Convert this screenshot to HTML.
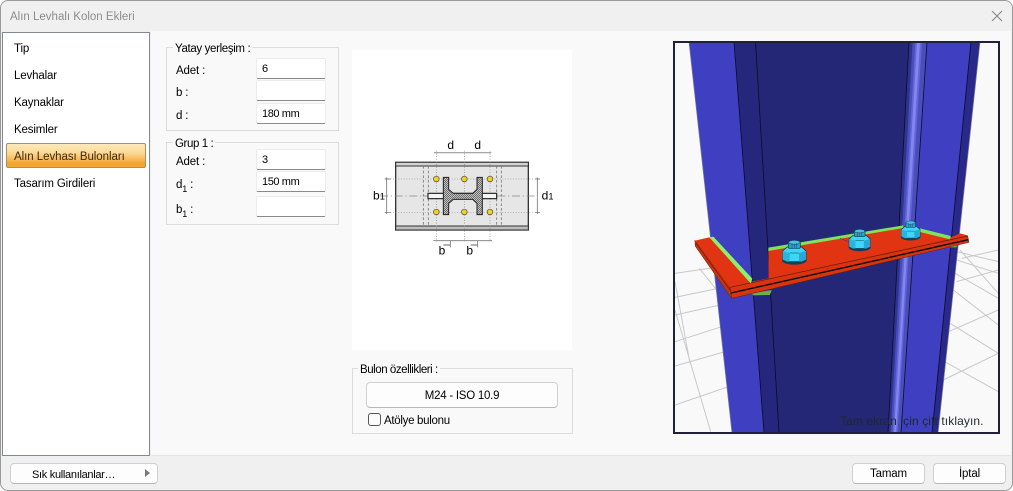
<!DOCTYPE html>
<html>
<head>
<meta charset="utf-8">
<style>
html,body{margin:0;padding:0;width:1013px;height:491px;overflow:hidden;background:#fff}
body{font-family:"Liberation Sans","DejaVu Sans",sans-serif;font-size:11.5px;letter-spacing:-.15px;color:#000}
.a{position:absolute}
.t{position:absolute;white-space:nowrap;line-height:14px;height:14px;transform:translateY(1px)}
#win{position:absolute;left:0;top:0;width:1011px;height:489px;border:1px solid #9a9a9a;border-radius:8px;background:#f0f0f0;overflow:hidden}
.inp{position:absolute;left:256px;width:68px;height:19px;background:#fff;border:1px solid #ececec;border-bottom:1px solid #8a8a8a;border-radius:2px;box-sizing:content-box}
.inp span{position:absolute;left:5px;top:3px;line-height:14px;font-size:11px;letter-spacing:-.4px}
.grp{position:absolute;border:1px solid #dcdcdc;box-sizing:border-box}
.lg{position:absolute;background:#f9f9f9;padding:0 2px;line-height:14px;white-space:nowrap;transform:translateY(1px)}
.btn{position:absolute;background:#fdfdfd;border:1px solid #d0d0d0;border-bottom-color:#b8b8b8;border-radius:4px;box-sizing:border-box;text-align:center;line-height:20px}
sub{font-size:9px;line-height:0;vertical-align:-4px}
</style>
</head>
<body>
<div id="win"></div>
<div class="t" style="left:10px;top:9px;color:#8c8c8c;font-size:11.5px;letter-spacing:0">Alın Levhalı Kolon Ekleri</div>
<svg class="a" style="left:990px;top:9px" width="14" height="14"><path d="M2 2L12 12M12 2L2 12" stroke="#888" stroke-width="1.1" fill="none"/></svg>

<div class="a" style="left:151px;top:31px;width:860px;height:424px;background:#f9f9f9;border-bottom:1px solid #e4e4e4"></div>
<div class="a" style="left:2px;top:32px;width:146px;height:422px;background:#fff;border:1px solid #828a94"></div>

<div class="t" style="left:14px;top:41px">Tip</div>
<div class="t" style="left:14px;top:68px">Levhalar</div>
<div class="t" style="left:14px;top:95px">Kaynaklar</div>
<div class="t" style="left:14px;top:122px">Kesimler</div>
<div class="a" style="left:6px;top:143px;width:140px;height:25px;box-sizing:border-box;border:1px solid #a98f62;border-radius:2px;background:linear-gradient(#fde9bd 0%,#fcd993 40%,#fbc670 55%,#f5a32c 85%,#f2a73a 100%)"></div>
<div class="t" style="left:14px;top:149px;color:#3a2a10;letter-spacing:-.05px">Alın Levhası Bulonları</div>
<div class="t" style="left:14px;top:176px">Tasarım Girdileri</div>

<div class="grp" style="left:166px;top:47px;width:173px;height:84px"></div>
<div class="lg" style="left:173px;top:41px;letter-spacing:-.35px">Yatay yerleşim :</div>
<div class="t" style="left:176px;top:63px">Adet :</div>
<div class="t" style="left:176px;top:85px">b :</div>
<div class="t" style="left:176px;top:108px">d :</div>
<div class="inp" style="top:58px"><span>6</span></div>
<div class="inp" style="top:80px"></div>
<div class="inp" style="top:103px"><span>180 mm</span></div>

<div class="grp" style="left:166px;top:142px;width:173px;height:83px"></div>
<div class="lg" style="left:173px;top:136px;letter-spacing:-.4px">Grup 1 :</div>
<div class="t" style="left:176px;top:154px">Adet :</div>
<div class="t" style="left:176px;top:177px">d<sub>1</sub> :</div>
<div class="t" style="left:176px;top:202px">b<sub>1</sub> :</div>
<div class="inp" style="top:149px"><span>3</span></div>
<div class="inp" style="top:171px"><span>150 mm</span></div>
<div class="inp" style="top:196px"></div>

<div class="a" style="left:352px;top:50px;width:220px;height:300px;background:#fff"></div>
<svg class="a" style="left:360px;top:130px;letter-spacing:0" width="200" height="130" viewBox="0 0 600 390" font-family="Liberation Sans, sans-serif">
  <defs>
    <pattern id="h" width="6" height="6" patternUnits="userSpaceOnUse">
      <rect width="6" height="6" fill="#c4c4c4"/>
      <rect width="3" height="3" fill="#6a6a6a"/>
      <rect x="3" y="3" width="3" height="3" fill="#6a6a6a"/>
    </pattern>
  </defs>
  <rect x="107" y="97" width="398" height="203" fill="#e6e6e6" stroke="#333" stroke-width="4"/>
  <rect x="107" y="97" width="398" height="11" fill="#d4d4d4" stroke="#333" stroke-width="3"/>
  <rect x="107" y="288" width="398" height="12" fill="#bdbdbd" stroke="#333" stroke-width="3"/>
  <g stroke="#777" stroke-width="2.5" stroke-dasharray="8 6" fill="none">
    <path d="M190 108V288M205 108V288M410 108V288M424 108V288"/>
  </g>
  <path d="M60 198H530" stroke="#888" stroke-width="2" stroke-dasharray="24 8 4 8" fill="none"/>
  <path d="M75 147H505M75 247H505M535 147H505M535 247H505" stroke="#999" stroke-width="2" stroke-dasharray="3 5" fill="none"/>
  <path d="M229 62V335M313 62V335M390 62V335" stroke="#888" stroke-width="2" stroke-dasharray="3 5" fill="none"/>
  <rect x="204" y="190" width="206" height="16" fill="#f5f5f5" stroke="#222" stroke-width="3.5"/>
  <path d="M250 142H266V178L280 190H338L351 178V142H367V254H351V220L338 208H280L266 220V254H250Z" fill="url(#h)" stroke="#222" stroke-width="3"/>
  <g fill="#f2d21e" stroke="#444" stroke-width="2">
    <circle cx="229" cy="147" r="8.5"/><circle cx="313" cy="147" r="8.5"/><circle cx="390" cy="147" r="8.5"/>
    <circle cx="229" cy="246" r="8.5"/><circle cx="313" cy="246" r="8.5"/><circle cx="390" cy="246" r="8.5"/>
  </g>
  <path d="M222 68H394" stroke="#999" stroke-width="3.5" fill="none"/>
  <path d="M220 332H396M80 142V252M532 142V252M271 332V352M353 332V352" stroke="#777" stroke-width="2.5" fill="none"/>
  <path d="M74 147H92M74 247H92M526 147H540M526 247H540" stroke="#666" stroke-width="2" fill="none"/>
  <path d="M250 345H270M332 345H352" stroke="#333" stroke-width="2" fill="none"/>
  <text x="262" y="57" font-size="36">d</text>
  <text x="343" y="57" font-size="36">d</text>
  <text x="39" y="208" font-size="36">b<tspan font-size="28">1</tspan></text>
  <text x="545" y="208" font-size="36">d<tspan font-size="28">1</tspan></text>
  <text x="236" y="373" font-size="36">b</text>
  <text x="319" y="373" font-size="36">b</text>
</svg>

<div class="grp" style="left:352px;top:368px;width:221px;height:66px"></div>
<div class="lg" style="left:358px;top:362px;letter-spacing:-.45px">Bulon özellikleri :</div>
<div class="btn" style="left:366px;top:382px;width:192px;height:26px;line-height:26px;letter-spacing:-.25px">M24 - ISO 10.9</div>
<div class="a" style="left:368px;top:413px;width:13px;height:13px;box-sizing:border-box;background:#fbfbfb;border:1px solid #555;border-radius:3px"></div>
<div class="t" style="left:384px;top:413px;letter-spacing:-.3px">Atölye bulonu</div>

<svg class="a" style="left:673px;top:41px" width="327" height="393" viewBox="673 41 327 393">
  <rect x="673" y="41" width="327" height="393" fill="#f9f9f9"/>
  <g transform="translate(670,210) scale(.33333)" stroke="#c8c8c8" stroke-width="3" fill="none">
    <path d="M15 190L135 172M15 262L145 235M15 315L150 285M15 395L155 350M15 468L165 425M15 585L175 530"/>
    <path d="M88 175L140 240M15 300L122 665M15 215L60 460"/>
    <path d="M860 125L985 155M860 150L985 190M855 190L985 265M850 240L985 345M840 340L985 430M815 450L985 545"/>
    <path d="M985 120L875 145M985 180L860 215M985 300L835 365M985 430L820 510M870 120L985 250"/>
  </g>
  <polygon points="689,42 734,42 764,433 732,433" fill="#3f3fc2"/>
  <polygon points="734,42 755.5,42 779,433 764,433" fill="#25277c"/>
  <polygon points="755.5,42 909,42 888,433 779,433" fill="#242676"/>
  <polygon points="927,42 971,42 932,433 901,433" fill="#3f3fc2"/>
  <polygon points="971,42 980,42 938,433 932,433" fill="#28298a"/>
  <polygon points="909,42 927,42 901,433 888,433" fill="#4a4eba"/>
  <polygon points="909,42 912.6,42 890.6,433 888,433" fill="#2f3290"/>
  <polygon points="915.3,42 922,42 897.5,433 892.5,433" fill="#6266d6"/>
  <polygon points="917,42 920,42 896.2,433 894,433" fill="#8285f2"/>
  <g stroke="#0b0b2a" stroke-width=".8" fill="none">
    <path d="M734 42L764 433M755.5 42L779 433M909 42L888 433M927 42L901 433M971 42L932 433"/>
  </g>
  <path d="M689 42L732 433M980 42L938 433" stroke="#77779a" stroke-width=".7" fill="none"/>

  <g transform="translate(670,210) scale(.33333)">
    <polygon points="245,250 305,240 300,255 250,256" fill="#6fae4e"/>
    <polygon points="838,105 862,100 860,112 840,112" fill="#6fae4e"/>
    <polygon points="75,92 180,232 185,265 76,108" fill="#c8340f" stroke="#8a240a" stroke-width="2"/>
    <polygon points="180,232 893,78 897,97 185,265" fill="#d8350f" stroke="#6a1a06" stroke-width="1.5"/>
    <path d="M183 249L895 89" stroke="#0a0505" stroke-width="4" fill="none"/>
    <path d="M77 98L182 243" stroke="#6a1a06" stroke-width="2" fill="none"/>
    <polygon points="75,92 118,82 245,215 296,205 295,120 700,50 750,60 840,83 870,70 893,76 893,78 180,232" fill="#e03413"/>
    <path d="M180 232L893 78" stroke="#6a1a06" stroke-width="2" fill="none"/>
    <polygon points="118,82 130,80 247,206 242,220" fill="#8df06a"/>
    <polygon points="295,113 700,46 700,54 295,123" fill="#80e25a"/>
    <polygon points="750,55 842,78 840,88 750,66" fill="#80e25a"/>
    <defs>
      <g id="bolt">
        <ellipse cx="0" cy="20" rx="37" ry="13" fill="#10405c"/>
        <polygon points="-35,-8 -22,-20 22,-20 35,-8 35,18 22,24 -22,24 -35,18" fill="#3dd6f7" stroke="#0d3a50" stroke-width="2.5"/>
        <polygon points="-35,-8 -14,-2 -14,24 -22,24 -35,18" fill="#2cb4dc"/>
        <polygon points="35,-8 14,-2 14,24 22,24 35,18" fill="#2aa8d2"/>
        <path d="M-14 -2H14" stroke="#0d3a50" stroke-width="1.5" fill="none"/>
        <rect x="-18" y="-36" width="36" height="20" rx="4" fill="#2f9fc8" stroke="#0d3a50" stroke-width="2"/>
        <ellipse cx="0" cy="-34" rx="17" ry="6" fill="#4cc0e2" stroke="#0d3a50" stroke-width="1.5"/>
        <path d="M-7 -32V-17M0 -30V-17M7 -32V-17" stroke="#0d3a50" stroke-width="1.2" fill="none"/>
      </g>
    </defs>
    <use href="#bolt" transform="translate(373,131)"/>
    <use href="#bolt" transform="translate(569,94) scale(.9)"/>
    <use href="#bolt" transform="translate(722,65) scale(.8)"/>
    <path d="M510 85L540 97" stroke="#3a1ee0" stroke-width="2" stroke-dasharray="5 3" fill="none"/>
  </g>
  <rect x="674" y="42" width="325" height="391" fill="none" stroke="#20203a" stroke-width="2"/>
</svg>
<div class="t" style="left:840px;top:413px;color:#1e2a2a;letter-spacing:.1px;font-size:12px">Tam ekran için çift tıklayın.</div>

<div class="btn" style="left:10px;top:463px;width:148px;height:21px"></div>
<div class="t" style="left:32px;top:467px;font-size:11px;letter-spacing:-.3px">Sık kullanılanlar…</div>
<svg class="a" style="left:144px;top:468px" width="8" height="10"><path d="M1 1L6 5L1 9Z" fill="#7a7a7a"/></svg>
<div class="btn" style="left:852px;top:463px;width:73px;height:21px">Tamam</div>
<div class="btn" style="left:933px;top:463px;width:73px;height:21px">İptal</div>
</body>
</html>
